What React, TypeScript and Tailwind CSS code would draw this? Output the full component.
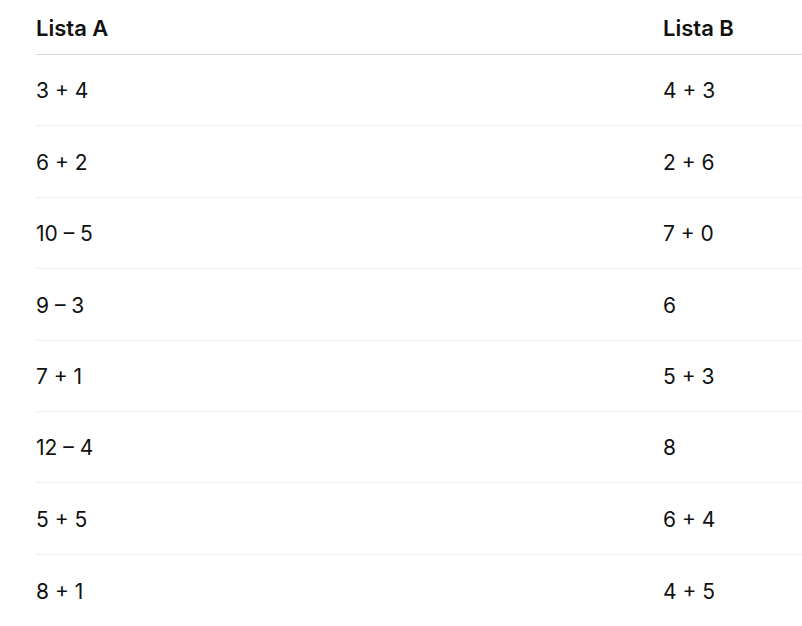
const rows: [string, string][] = [
  ['3 + 4', '4 + 3'],
  ['6 + 2', '2 + 6'],
  ['10 – 5', '7 + 0'],
  ['9 – 3', '6'],
  ['7 + 1', '5 + 3'],
  ['12 – 4', '8'],
  ['5 + 5', '6 + 4'],
  ['8 + 1', '4 + 5'],
]

export default function App() {
  return (
    <div className="min-h-screen bg-white text-[#111] overflow-hidden" style={{ fontFamily: 'Inter, "Noto Sans", sans-serif' }}>
      <div className="pl-9 w-[900px]">
        {/* header */}
        <div className="grid grid-cols-[627px_1fr] h-[55px] items-center border-b border-[#d9d9d9] pt-[3px]">
          <div className="text-[22px] font-semibold">Lista A</div>
          <div className="text-[22px] font-semibold">Lista B</div>
        </div>

        {rows.map(([a, b], i) => (
          <div
            key={i}
            className={`grid grid-cols-[627px_1fr] h-[71.4px] items-center text-[21px] pt-[2px] ${
              i < rows.length - 1 ? 'border-b border-[#f0f0f0]' : ''
            }`}
          >
            <div>{a}</div>
            <div>{b}</div>
          </div>
        ))}
      </div>
    </div>
  )
}
